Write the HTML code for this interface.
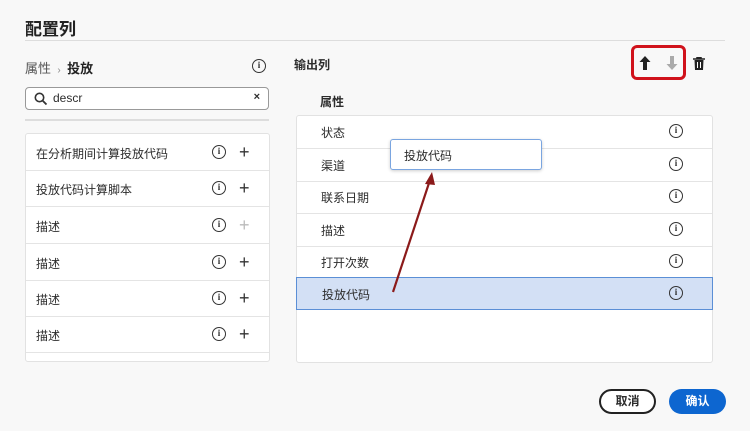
<!DOCTYPE html>
<html><head><meta charset="utf-8"><style>
*{box-sizing:border-box;margin:0;padding:0}
body{width:750px;height:431px;background:#f8f8f8;font-family:"Liberation Sans","Noto Sans CJK SC",sans-serif;color:#2c2c2c;position:relative;overflow:hidden;font-size:12px}
.a{position:absolute}
.info{position:absolute;width:14px;height:14px;border:1.5px solid #333;border-radius:50%;font-size:9px;font-weight:bold;text-align:center;line-height:11px;font-family:"Liberation Serif",serif}
.row{position:absolute;left:0;right:0;border-bottom:1px solid #e4e4e4}
.plus{position:absolute;font-size:18px;line-height:18px;color:#333}
</style></head><body>
<div class="a" style="left:25px;top:15px;font-size:17px;font-weight:bold;color:#222">配置列</div>
<div class="a" style="left:25px;top:40px;width:700px;height:1px;background:#ddd"></div>

<div class="a" style="left:25px;top:58px;font-size:13px;color:#555">属性 <span style="font-size:10px;color:#888">&nbsp;›&nbsp;</span> <b style="color:#222">投放</b></div>
<div class="info" style="left:252px;top:59px">i</div>
<div class="a" style="left:25px;top:87px;width:244px;height:23px;border:1px solid #999;border-radius:4px;background:#fff">
<svg class="a" style="left:8px;top:4px" width="14" height="14" viewBox="0 0 14 14"><circle cx="5.5" cy="5.5" r="4.2" fill="none" stroke="#333" stroke-width="1.6"/><path d="M8.6 8.6L12.5 12.5" stroke="#333" stroke-width="1.8"/></svg>
<span class="a" style="left:27px;top:3px;font-size:12px">descr</span>
<span class="a" style="right:8px;top:3px;font-size:11px;font-weight:bold">×</span></div>
<div class="a" style="left:25px;top:119px;width:244px;height:2px;background:#ddd"></div>

<div class="a" style="left:25px;top:133px;width:245px;height:229px;background:#fff;border:1px solid #e2e2e2;border-radius:3px">
<div class="row" style="top:0;height:37px"><span class="a" style="left:10px;top:11px">在分析期间计算投放代码</span><div class="info" style="left:186px;top:11px">i</div><span class="plus" style="left:213px;top:9px">+</span></div>
<div class="row" style="top:37px;height:36px"><span class="a" style="left:10px;top:10px">投放代码计算脚本</span><div class="info" style="left:186px;top:10px">i</div><span class="plus" style="left:213px;top:8px">+</span></div>
<div class="row" style="top:73px;height:37px"><span class="a" style="left:10px;top:11px">描述</span><div class="info" style="left:186px;top:11px">i</div><span class="plus" style="left:213px;top:9px;color:#bbb">+</span></div>
<div class="row" style="top:110px;height:37px"><span class="a" style="left:10px;top:11px">描述</span><div class="info" style="left:186px;top:11px">i</div><span class="plus" style="left:213px;top:9px">+</span></div>
<div class="row" style="top:147px;height:36px"><span class="a" style="left:10px;top:10px">描述</span><div class="info" style="left:186px;top:10px">i</div><span class="plus" style="left:213px;top:8px">+</span></div>
<div class="row" style="top:183px;height:36px"><span class="a" style="left:10px;top:10px">描述</span><div class="info" style="left:186px;top:10px">i</div><span class="plus" style="left:213px;top:8px">+</span></div>
</div>

<div class="a" style="left:294px;top:56px;font-weight:bold">输出列</div>
<div class="a" style="left:631px;top:45px;width:55px;height:35px;border:3px solid #d0121b;border-radius:6px"></div>
<svg class="a" style="left:639px;top:56px" width="12" height="14" viewBox="0 0 12 14"><path d="M6 0L11.5 6H8V14H4V6H0.5Z" fill="#222"/></svg>
<svg class="a" style="left:666px;top:56px" width="12" height="14" viewBox="0 0 12 14"><path d="M6 14L11.5 8H8V0H4V8H0.5Z" fill="#aaa"/></svg>
<svg class="a" style="left:693px;top:57px" width="12" height="13" viewBox="0 0 12 13"><path d="M0 2H12M4 2V0.5H8V2" stroke="#222" stroke-width="1.5" fill="none"/><path d="M1.5 3H10.5L10 13H2Z" fill="#222"/><path d="M4.5 5V11M7.5 5V11" stroke="#fff" stroke-width="1"/></svg>
<div class="a" style="left:320px;top:93px;font-weight:bold">属性</div>

<div class="a" style="left:296px;top:115px;width:417px;height:248px;background:#fff;border:1px solid #e2e2e2;border-radius:3px">
<div class="row" style="top:0;height:33px"><span class="a" style="left:24px;top:8px">状态</span><div class="info" style="left:372px;top:8px">i</div></div>
<div class="row" style="top:33px;height:33px"><span class="a" style="left:24px;top:8px">渠道</span><div class="info" style="left:372px;top:8px">i</div></div>
<div class="row" style="top:66px;height:32px"><span class="a" style="left:24px;top:7px">联系日期</span><div class="info" style="left:372px;top:7px">i</div></div>
<div class="row" style="top:98px;height:33px"><span class="a" style="left:24px;top:8px">描述</span><div class="info" style="left:372px;top:8px">i</div></div>
<div class="row" style="top:131px;height:31px"><span class="a" style="left:24px;top:7px">打开次数</span><div class="info" style="left:372px;top:7px">i</div></div>
<div class="a" style="left:-1px;top:161px;width:417px;height:33px;background:#d3e0f5;border:1.5px solid #5b8fd6"><span class="a" style="left:25px;top:8px">投放代码</span><div class="info" style="left:372px;top:8px">i</div></div>
</div>

<div class="a" style="left:390px;top:139px;width:152px;height:31px;background:#fff;border:1px solid #7aa5e0;border-radius:3px;box-shadow:0 1px 3px rgba(0,0,0,.2)"><span class="a" style="left:13px;top:7px">投放代码</span></div>

<svg class="a" style="left:0;top:0" width="750" height="431"><path d="M393 292L430 180" stroke="#8b1a1a" stroke-width="2.2"/><path d="M432 172L425 184L435 185Z" fill="#8b1a1a"/></svg>

<div class="a" style="left:599px;top:389px;width:57px;height:25px;border:2px solid #222;border-radius:13px;background:#fff;text-align:center;line-height:21px;font-weight:bold">取消</div>
<div class="a" style="left:669px;top:389px;width:57px;height:25px;border-radius:13px;background:#0d66d0;color:#fff;text-align:center;line-height:25px;font-weight:bold">确认</div>
</body></html>
